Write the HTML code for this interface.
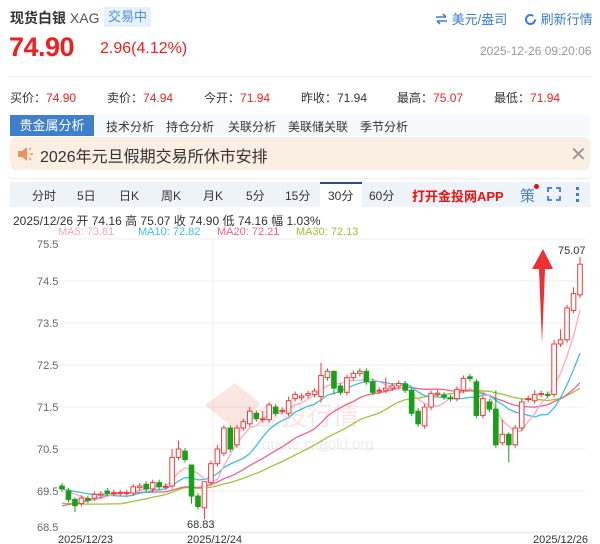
<!DOCTYPE html>
<html><head><meta charset="utf-8">
<style>
*{margin:0;padding:0;box-sizing:border-box}
body{width:600px;height:544px;background:#fff;font-family:"Liberation Sans","Noto Sans CJK SC",sans-serif;color:#333;position:relative;overflow:hidden}
.a{position:absolute;white-space:nowrap}
.r{color:#f21e1e}
</style></head><body>
<div class="a" style="left:10px;top:8px;font-size:14px;font-weight:bold;color:#333">现货白银 <span style="font-weight:normal;color:#555">XAG</span></div>
<div class="a" style="left:104px;top:7px;height:20px;padding:0 4px;background:#e6f1fc;color:#4a90d9;font-size:13px;line-height:20px">交易中</div>
<div class="a" style="left:435px;top:9px;font-size:13px;color:#3a7bd5"><svg width="13" height="12" viewBox="0 0 13 12" style="vertical-align:-1px"><path d="M1 4h10M8 1l3 3M12 8H2M5 11L2 8" stroke="#3a7bd5" stroke-width="1.6" fill="none"/></svg> 美元/盎司</div>
<div class="a" style="left:524px;top:9px;font-size:13px;color:#3a7bd5"><svg width="13" height="13" viewBox="0 0 13 13" style="vertical-align:-2px"><circle cx="6.5" cy="6.5" r="4.5" stroke="#3a7bd5" stroke-width="2" fill="none" stroke-dasharray="24 4"/></svg> 刷新行情</div>
<div class="a r" style="left:9px;top:32px;font-size:27px;font-weight:bold;letter-spacing:-0.5px">74.90</div>
<div class="a r" style="left:100px;top:40px;font-size:16px">2.96(4.12%)</div>
<div class="a" style="left:480px;top:44px;font-size:12px;color:#999">2025-12-26 09:20:06</div>
<div class="a" style="left:10px;top:76px;width:580px;height:1px;background:#eee"></div>
<div class="a" style="left:10px;top:89px;font-size:12px">买价：<span class="r">74.90</span></div>
<div class="a" style="left:107px;top:89px;font-size:12px">卖价：<span class="r">74.94</span></div>
<div class="a" style="left:204px;top:89px;font-size:12px">今开：<span class="r">71.94</span></div>
<div class="a" style="left:301px;top:89px;font-size:12px">昨收：71.94</div>
<div class="a" style="left:397px;top:89px;font-size:12px">最高：<span class="r">75.07</span></div>
<div class="a" style="left:494px;top:89px;font-size:12px">最低：<span class="r">71.94</span></div>
<div class="a" style="left:10px;top:115px;width:580px;height:21px;background:#f6f8fb"></div>
<div class="a" style="left:10px;top:115px;width:84px;height:21px;background:#3f7fcc;color:#fff;font-size:13px;line-height:21px;text-align:center">贵金属分析</div>
<div class="a" style="left:106px;top:118px;font-size:12px">技术分析</div>
<div class="a" style="left:166px;top:118px;font-size:12px">持仓分析</div>
<div class="a" style="left:228px;top:118px;font-size:12px">关联分析</div>
<div class="a" style="left:288px;top:118px;font-size:12px">美联储关联</div>
<div class="a" style="left:360px;top:118px;font-size:12px">季节分析</div>
<div class="a" style="left:10px;top:137px;width:580px;height:33px;background:#fbeee3;border-radius:6px"></div>
<svg class="a" style="left:16px;top:145px" width="18" height="18" viewBox="0 0 18 18"><path d="M2 6h4l5-4v14l-5-4H2z" fill="#e8955a"/><path d="M13 5l2-2M14 9h3M13 13l2 2" stroke="#e8955a" stroke-width="1.5"/></svg>
<div class="a" style="left:40px;top:143px;font-size:16px;color:#333">2026年元旦假期交易所休市安排</div>
<div class="a" style="left:570px;top:142px;font-size:20px;color:#999">✕</div>
<div class="a" style="left:10px;top:178px;width:580px;height:1px;background:#eee"></div>
<div class="a" style="left:10px;top:182px;width:580px;height:25px;background:#eef3fa"></div>
<div class="a" style="left:320px;top:182px;width:42px;height:25px;background:#fff;border-top:2px solid #2c4f8a"></div>
<div class="a" style="left:32px;top:187px;font-size:12px">分时</div>
<div class="a" style="left:77px;top:187px;font-size:12px">5日</div>
<div class="a" style="left:119px;top:187px;font-size:12px">日K</div>
<div class="a" style="left:161px;top:187px;font-size:12px">周K</div>
<div class="a" style="left:203px;top:187px;font-size:12px">月K</div>
<div class="a" style="left:246px;top:187px;font-size:12px">5分</div>
<div class="a" style="left:285px;top:187px;font-size:12px">15分</div>
<div class="a" style="left:328px;top:187px;font-size:12px">30分</div>
<div class="a" style="left:369px;top:187px;font-size:12px">60分</div>
<div class="a" style="left:412px;top:186px;font-size:13px;font-weight:bold;color:#f01010">打开金投网APP</div>
<div class="a" style="left:520px;top:185px;font-size:15px;color:#4a7fc4">策</div>
<div class="a" style="left:534px;top:184px;width:5px;height:5px;border-radius:50%;background:#e01010"></div>
<svg class="a" style="left:547px;top:187px" width="14" height="14" viewBox="0 0 14 14"><path d="M1 5V1h4M9 1h4v4M13 9v4H9M5 13H1V9" stroke="#3a7bd5" stroke-width="1.8" fill="none"/></svg>
<div class="a" style="left:576px;top:187px;width:3px;height:3px;background:#3a7bd5;box-shadow:0 6px #3a7bd5,0 12px #3a7bd5"></div>
<div class="a" style="left:13px;top:212px;font-size:12px;color:#333">2025/12/26 开 74.16 高 75.07 收 74.90 低 74.16 幅 1.03%</div>
<div class="a" style="left:58px;top:226px;font-size:11px;color:#f7a6c0">MA5: 73.81</div>
<div class="a" style="left:138px;top:226px;font-size:11px;color:#3bbfe0">MA10: 72.82</div>
<div class="a" style="left:217px;top:226px;font-size:11px;color:#f0608a">MA20: 72.21</div>
<div class="a" style="left:296px;top:226px;font-size:11px;color:#99c22e">MA30: 72.13</div>
<svg class="a" style="left:0;top:0" width="600" height="544" id="ch"></svg>
<script>
var Y=function(p){return 239+(75.5-p)*42};
var s='';
[75.5,74.5,73.5,72.5,71.5,70.5,69.5,68.5].forEach(function(p){var y=Y(p);var off=p==75.5?9:(p==68.5?-2:4);s+='<line x1="58" x2="585" y1="'+y+'" y2="'+y+'" stroke="#f0f0f0" stroke-width="1.2"/><text x="37" y="'+(y+off)+'" font-size="11" fill="#666" font-family="Liberation Sans">'+p.toFixed(1)+'</text>';});
s+='<line x1="213" x2="213" y1="239" y2="532" stroke="#f0f0f0" stroke-width="1.2"/>';
s+='<g opacity="0.13"><path d="M205 405l30-22 25 20-20 30z" fill="#e04020"/><text x="255" y="425" font-size="26" fill="#e04020" font-family="Noto Sans CJK SC">金投行情</text><text x="262" y="449" font-size="15" fill="#777" font-family="Liberation Sans">quote.cngold.org</text></g>';
var d=[[69.62,69.55],[69.5,69.3],[69.3,69.15,69.35,69.0],[69.2,69.33],[69.32,69.28],[69.33,69.42],[69.4,69.43],[69.5,69.44],[69.45,69.46],[69.45,69.46],[69.45,69.46],[69.45,69.6],[69.58,69.62],[69.66,69.55],[69.55,69.7],[69.7,69.6],[69.6,69.61],[69.62,70.3,70.5],[70.3,70.5,70.7],[70.45,70.25],[70.12,69.38,70.12,69.2],[69.38,69.13],[69.1,69.72,69.72,68.83],[69.7,70.15],[70.15,70.5,70.6],[70.4,71.0],[71.0,70.5],[70.6,71.0],[71.0,71.15],[71.1,71.4,71.5],[71.35,71.22],[71.2,71.22,71.4],[71.2,71.55],[71.5,71.35],[71.4,71.42],[71.35,71.65,71.75],[71.7,71.8],[71.72,71.76],[71.78,71.82],[71.8,71.88],[71.75,72.25,72.55,71.6],[72.2,72.35],[72.35,71.95,72.35,71.8],[72.0,71.85],[71.85,72.2],[72.2,72.3],[72.3,72.35],[72.35,72.1],[72.1,71.85],[71.88,71.9],[71.9,71.95,72.2],[71.95,72.0],[72.0,72.06],[72.05,71.9],[71.9,71.35],[71.4,71.1],[71.05,71.5],[71.5,71.82],[71.8,71.83],[71.78,71.74],[71.72,71.7],[71.7,71.92],[71.9,72.18],[72.22,72.18],[72.1,71.3],[71.3,71.7],[71.62,71.45],[71.45,70.6,71.9],[70.65,70.85,71.2],[70.85,70.6,70.9,70.18],[70.6,71.0],[71.0,71.62],[71.68,71.7],[71.65,71.8,71.9],[71.8,71.82],[71.8,71.78],[71.8,73.0,73.1],[73.0,73.1,73.35],[73.1,73.86],[73.8,74.2,74.35],[74.17,74.9,75.07]];
var pad=[];for(var i=0;i<30;i++)pad.push(i<10?69.4:(i<20?68.65:69.55));
var cl=pad.concat(d.map(function(c){return c[1]}));
var n=d.length,dx=(580-62)/(n-1);
function ma(k,col){var pts=[];for(var i=0;i<n;i++){var j=i+30,sum=0;for(var m=0;m<k;m++)sum+=cl[j-m];pts.push((62+i*dx).toFixed(1)+','+Y(sum/k).toFixed(1));}s+='<polyline points="'+pts.join(' ')+'" fill="none" stroke="'+col+'" stroke-width="1.3"/>';}
ma(30,'#9cc53a');ma(20,'#f0608a');ma(10,'#3bbfe0');ma(5,'#f7aac4');
d.forEach(function(c,i){var x=62+i*dx,o=c[0],cc=c[1],h=c[2]||Math.max(o,cc)+0.07,l=c[3]||Math.min(o,cc)-0.07;var up=cc>=o,col=up?'#f23a3a':'#18a018';var t=Y(Math.max(o,cc)),b=Y(Math.min(o,cc));if(b-t<1)b=t+1;
s+='<line x1="'+x+'" x2="'+x+'" y1="'+Y(h)+'" y2="'+t+'" stroke="'+col+'"/><line x1="'+x+'" x2="'+x+'" y1="'+b+'" y2="'+Y(l)+'" stroke="'+col+'"/>';
s+='<rect x="'+(x-2.3)+'" y="'+t+'" width="4.6" height="'+(b-t)+'" fill="'+(up?'#fff':col)+'" stroke="'+col+'" stroke-width="1"/>';});
s+='<path d="M543 249l-11 20h7l3 75 3-75h8z" fill="#f03030"/>';
s+='<text x="558" y="254" font-size="11" fill="#333" font-family="Liberation Sans">75.07</text>';
s+='<text x="187" y="528" font-size="11" fill="#333" font-family="Liberation Sans">68.83</text>';
s+='<line x1="58" x2="585" y1="532" y2="532" stroke="#eee"/>';
s+='<text x="58" y="543" font-size="11" fill="#333" font-family="Liberation Sans">2025/12/23</text><text x="187" y="543" font-size="11" fill="#333" font-family="Liberation Sans">2025/12/24</text><text x="533" y="543" font-size="11" fill="#333" font-family="Liberation Sans">2025/12/26</text>';
document.getElementById('ch').innerHTML=s;
</script>
</body></html>
